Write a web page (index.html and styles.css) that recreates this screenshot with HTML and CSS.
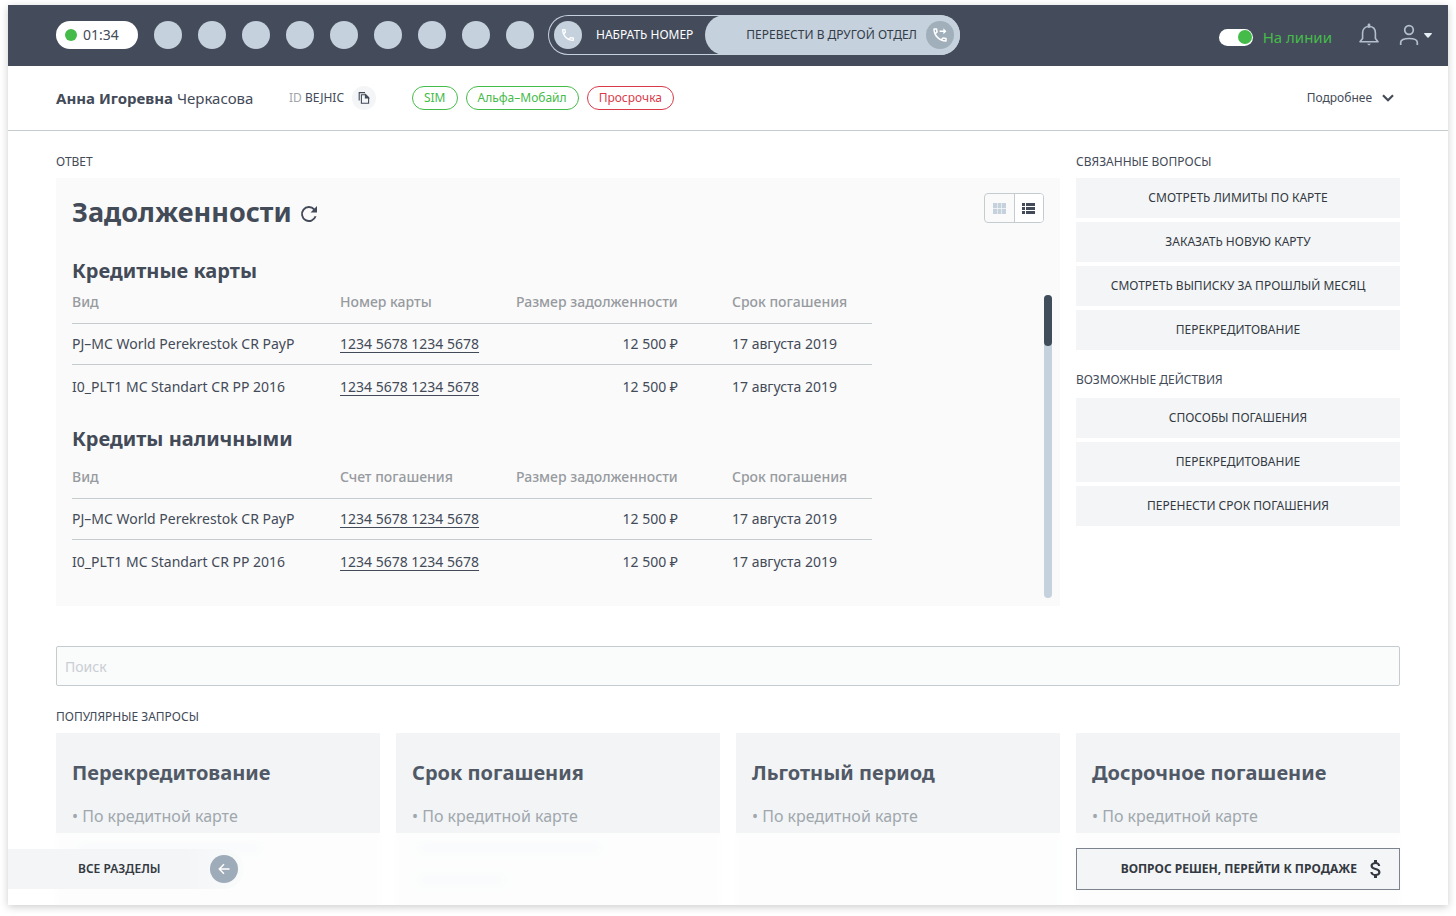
FILE: index.html
```html
<!DOCTYPE html>
<html lang="ru">
<head>
<meta charset="utf-8">
<title>Задолженности</title>
<meta name="viewport" content="width=device-width, initial-scale=1">
<link rel="stylesheet" href="styles.css">
</head>
<body>
<div class="app">
  <header class="topbar">
    <div class="timer"><span class="timer-dot"></span>01:34</div>
    <div class="slots">
      <span class="slot"></span><span class="slot"></span><span class="slot"></span>
      <span class="slot"></span><span class="slot"></span><span class="slot"></span>
      <span class="slot"></span><span class="slot"></span><span class="slot"></span>
    </div>
    <div class="call-group">
      <button type="button" class="dial">
        <span class="round">
          <svg width="16" height="16" viewBox="0 0 24 24" fill="currentColor"><path d="M6.54 5c.06.89.21 1.76.45 2.59l-1.2 1.2c-.41-1.2-.67-2.47-.76-3.79h1.51m9.86 12.02c.85.24 1.72.39 2.6.45v1.49c-1.32-.09-2.59-.35-3.8-.75l1.2-1.19M7.5 3H4c-.55 0-1 .45-1 1 0 9.39 7.61 17 17 17 .55 0 1-.45 1-1v-3.49c0-.55-.45-1-1-1-1.24 0-2.45-.2-3.57-.57-.1-.04-.21-.05-.31-.05-.26 0-.51.1-.71.29l-2.2 2.2c-2.83-1.45-5.15-3.76-6.59-6.59l2.2-2.2c.28-.28.36-.67.25-1.02C8.7 6.45 8.5 5.25 8.5 4c0-.55-.45-1-1-1z"/></svg>
        </span>
        НАБРАТЬ НОМЕР
      </button>
      <button type="button" class="transfer">
        ПЕРЕВЕСТИ В ДРУГОЙ ОТДЕЛ
        <span class="round round-dark">
          <svg width="18" height="18" viewBox="0 0 24 24" fill="currentColor"><path d="M6.54 5c.06.89.21 1.76.45 2.59l-1.2 1.2c-.41-1.2-.67-2.47-.76-3.79h1.51m9.86 12.02c.85.24 1.72.39 2.6.45v1.49c-1.32-.09-2.59-.35-3.8-.75l1.2-1.19M7.5 3H4c-.55 0-1 .45-1 1 0 9.39 7.61 17 17 17 .55 0 1-.45 1-1v-3.49c0-.55-.45-1-1-1-1.24 0-2.45-.2-3.57-.57-.1-.04-.21-.05-.31-.05-.26 0-.51.1-.71.29l-2.2 2.2c-2.83-1.45-5.15-3.76-6.59-6.59l2.2-2.2c.28-.28.36-.67.25-1.02C8.7 6.45 8.5 5.25 8.5 4c0-.55-.45-1-1-1z"/><path d="M20.500 7l-4-4v3h-5v2h5v3z"/></svg>
        </span>
      </button>
    </div>
    <div class="status">
      <input type="checkbox" id="online" class="toggle" checked>
      <label for="online">На линии</label>
    </div>
    <button type="button" class="icon-button" aria-label="Уведомления">
      <svg width="20" height="24" viewBox="0 0 20 24" fill="none" stroke="currentColor" stroke-width="1.600" stroke-linejoin="round"><path d="M3.600 15.500V10C3.600 6 6 3.500 10 3.500S16.400 6 16.400 10V15.500L19 18.800H1z"/><path d="M10 2v1.500" stroke-width="2.800" stroke-linecap="round"/><path d="M8 20.800h4L10 22.600z" fill="currentColor" stroke="none"/></svg>
    </button>
    <button type="button" class="icon-button user" aria-label="Профиль">
      <svg width="20" height="22" viewBox="0 0 20 22" fill="none" stroke="currentColor" stroke-width="1.700"><circle cx="10" cy="6" r="4.300"/><path d="M1.700 21v-2.500C1.700 15.800 5 14.500 10 14.500s8.300 1.300 8.300 4V21"/></svg>
      <svg width="8" height="5" viewBox="0 0 8 5" fill="#e6edf3"><path d="M.5 0h7q.8.300.2 1L4.600 4.500q-.6.600-1.200 0L.3 1Q-.3.300.5 0z"/></svg>
    </button>
  </header>

  <section class="client">
    <h1 class="client-name"><b>Анна Игоревна</b> Черкасова</h1>
    <div class="client-id"><span class="muted">ID</span> BEJHIC</div>
    <button type="button" class="copy" aria-label="Скопировать ID">
      <svg width="12" height="14" viewBox="0 0 12 14" fill="none" stroke="currentColor" stroke-width="1.100"><path d="M1.200 9.500V1.600H7"/><path d="M3.400 3.700H7.700L10.600 6.600V12.200H3.400z"/><path d="M7.400 3.700V6.900H10.600z" fill="currentColor"/></svg>
    </button>
    <ul class="tags">
      <li class="tag">SIM</li>
      <li class="tag">Альфа–Мобайл</li>
      <li class="tag tag-alert">Просрочка</li>
    </ul>
    <button type="button" class="more">Подробнее
      <svg width="12" height="8" viewBox="0 0 12 8" fill="none" stroke="currentColor" stroke-width="2.200"><path d="M1 1.200l5 5 5-5"/></svg>
    </button>
  </section>

  <main class="content">
    <div class="workspace">
      <section class="answer">
        <h2 class="caption">ОТВЕТ</h2>
        <div class="panel">
          <div class="panel-head">
            <h3 class="panel-title">Задолженности</h3>
            <button type="button" class="refresh" aria-label="Обновить">
              <svg width="18" height="18" viewBox="0 0 18 18" fill="none" stroke="currentColor" stroke-width="1.900"><path d="M15.600 11.300A7 7 0 1 1 14.200 4.300L15.500 5.600"/><path d="M17 1v6.500h-6.500z" fill="currentColor" stroke="none"/></svg>
            </button>
            <div class="view-switch">
              <button type="button" class="view" aria-label="Плитка">
                <svg width="13" height="11" viewBox="0 0 13 11" fill="currentColor"><path d="M0 0h4v5H0zM4.600 0h3.800v5H4.600zM9 0h4v5H9zM0 5.700h4V11H0zM4.600 5.700h3.800V11H4.600zM9 5.700h4V11H9z"/></svg>
              </button>
              <button type="button" class="view view-active" aria-label="Список">
                <svg width="13" height="11" viewBox="0 0 13 11" fill="currentColor"><path d="M0 0h3v3H0zM4 0h9v3H4zM0 4h3v3H0zM4 4h9v3H4zM0 8h3v3H0zM4 8h9v3H4z"/></svg>
              </button>
            </div>
          </div>
          <div class="panel-body">
            <div class="groups">
              <h4 class="group-title">Кредитные карты</h4>
              <table class="debts">
                <thead><tr><th class="col-kind">Вид</th><th class="col-number">Номер карты</th><th class="col-sum">Размер задолженности</th><th>Срок погашения</th></tr></thead>
                <tbody>
                  <tr><td>PJ–MC World Perekrestok CR PayP</td><td><a href="#">1234 5678 1234 5678</a></td><td class="sum">12 500 ₽</td><td>17 августа 2019</td></tr>
                  <tr><td>I0_PLT1 MC Standart CR PP 2016</td><td><a href="#">1234 5678 1234 5678</a></td><td class="sum">12 500 ₽</td><td>17 августа 2019</td></tr>
                </tbody>
              </table>
              <h4 class="group-title group-next">Кредиты наличными</h4>
              <table class="debts">
                <thead><tr><th class="col-kind">Вид</th><th class="col-number">Счет погашения</th><th class="col-sum">Размер задолженности</th><th>Срок погашения</th></tr></thead>
                <tbody>
                  <tr><td>PJ–MC World Perekrestok CR PayP</td><td><a href="#">1234 5678 1234 5678</a></td><td class="sum">12 500 ₽</td><td>17 августа 2019</td></tr>
                  <tr><td>I0_PLT1 MC Standart CR PP 2016</td><td><a href="#">1234 5678 1234 5678</a></td><td class="sum">12 500 ₽</td><td>17 августа 2019</td></tr>
                </tbody>
              </table>
            </div>
            <div class="track"><div class="thumb"></div></div>
          </div>
        </div>
      </section>

      <aside class="side">
        <h2 class="caption">СВЯЗАННЫЕ ВОПРОСЫ</h2>
        <div class="actions">
          <button type="button" class="action">СМОТРЕТЬ ЛИМИТЫ ПО КАРТЕ</button>
          <button type="button" class="action">ЗАКАЗАТЬ НОВУЮ КАРТУ</button>
          <button type="button" class="action">СМОТРЕТЬ ВЫПИСКУ ЗА ПРОШЛЫЙ МЕСЯЦ</button>
          <button type="button" class="action">ПЕРЕКРЕДИТОВАНИЕ</button>
        </div>
        <h2 class="caption caption-next">ВОЗМОЖНЫЕ ДЕЙСТВИЯ</h2>
        <div class="actions">
          <button type="button" class="action">СПОСОБЫ ПОГАШЕНИЯ</button>
          <button type="button" class="action">ПЕРЕКРЕДИТОВАНИЕ</button>
          <button type="button" class="action">ПЕРЕНЕСТИ СРОК ПОГАШЕНИЯ</button>
        </div>
      </aside>
    </div>

    <input type="search" class="search" placeholder="Поиск" aria-label="Поиск">

    <h2 class="caption">ПОПУЛЯРНЫЕ ЗАПРОСЫ</h2>
    <div class="cards">
      <article class="card"><h3>Перекредитование</h3><ul><li>По кредитной карте</li></ul><div class="ghost"></div></article>
      <article class="card"><h3>Срок погашения</h3><ul><li>По кредитной карте</li></ul><div class="ghost"></div><div class="ghost ghost-short"></div></article>
      <article class="card"><h3>Льготный период</h3><ul><li>По кредитной карте</li></ul></article>
      <article class="card"><h3>Досрочное погашение</h3><ul><li>По кредитной карте</li></ul></article>
    </div>
  </main>

  <footer class="dock">
    <button type="button" class="sections">ВСЕ РАЗДЕЛЫ
      <span class="round round-arrow">
        <svg width="12" height="12" viewBox="0 0 12 12" fill="none" stroke="currentColor" stroke-width="1.500"><path d="M11.500 6H1.500M6 1.300L1.300 6 6 10.700"/></svg>
      </span>
    </button>
    <button type="button" class="sale">ВОПРОС РЕШЕН, ПЕРЕЙТИ К ПРОДАЖЕ
      <svg width="24" height="24" viewBox="0 0 24 24" fill="currentColor"><path d="M11.800 10.900c-2.270-.59-3-1.200-3-2.150 0-1.090 1.010-1.850 2.700-1.850 1.780 0 2.440.85 2.500 2.100h2.210c-.07-1.720-1.120-3.300-3.210-3.810V3h-3v2.160c-1.940.42-3.500 1.680-3.500 3.610 0 2.310 1.910 3.460 4.700 4.130 2.500.6 3 1.480 3 2.410 0 .69-.49 1.790-2.700 1.790-2.060 0-2.870-.92-2.980-2.100h-2.200c.12 2.190 1.760 3.420 3.680 3.830V21h3v-2.150c1.950-.37 3.500-1.500 3.500-3.550 0-2.840-2.430-3.810-4.700-4.400z"/></svg>
    </button>
  </footer>
</div>
</body>
</html>
```

FILE: styles.css
```css
* { box-sizing: border-box; }

body {
  margin: 0;
  padding: 5px 8px 11px;
  overflow: hidden;
  background: #fff;
  color: #434a58;
  font-family: "Noto Sans", "Open Sans", sans-serif;
  font-size: 14px;
  line-height: 20px;
}

h1, h2, h3, h4, ul { margin: 0; padding: 0; }
ul { list-style: none; }
svg { display: block; flex: none; }

button {
  border: 0;
  padding: 0;
  background: none;
  color: inherit;
  font: inherit;
  cursor: pointer;
}

.app {
  position: relative;
  display: flex;
  flex-direction: column;
  height: calc(100vh - 16px);
  overflow: hidden;
  background: #fff;
  box-shadow: 0 2px 8px rgba(0, 0, 0, 0.2);
}

/* Top bar */
.topbar {
  flex: none;
  display: flex;
  align-items: center;
  height: 61px;
  padding: 0 16px 1px 48px;
  background: #444c5c;
}

.timer {
  display: flex;
  align-items: center;
  gap: 6px;
  width: 82px;
  height: 28px;
  padding-left: 9px;
  border-radius: 14px;
  background: #fff;
}

.timer-dot {
  width: 12px;
  height: 12px;
  border-radius: 50%;
  background: #45bb49;
}

.slots {
  display: flex;
  gap: 16px;
  margin: 0 14px 0 16px;
}

.slot {
  width: 28px;
  height: 28px;
  border-radius: 50%;
  background: #c5d1dc;
}

.call-group {
  display: flex;
  height: 40px;
  border-radius: 20px;
  box-shadow: inset 0 0 0 1px #c5d1dc;
  font-size: 12px;
  white-space: nowrap;
}

.dial {
  display: flex;
  align-items: center;
  gap: 14px;
  width: 157px;
  padding-left: 6px;
  color: #fff;
}

.transfer {
  display: flex;
  align-items: center;
  justify-content: flex-end;
  gap: 9px;
  width: 255px;
  padding-right: 6px;
  border-radius: 20px;
  background: #c5d1dc;
  color: #343c48;
}

.round {
  flex: none;
  display: flex;
  align-items: center;
  justify-content: center;
  width: 28px;
  height: 28px;
  border-radius: 50%;
  background: #c5d1dc;
  color: #fff;
}

.round-dark { background: #a0afba; }
.round-arrow { background: #9eabb8; }

.status {
  display: flex;
  align-items: center;
  gap: 10px;
  margin-left: auto;
  padding-top: 4px;
  color: #45bb49;
  font-size: 15px;
}

.toggle {
  appearance: none;
  display: flex;
  align-items: center;
  justify-content: flex-end;
  width: 34px;
  height: 17px;
  margin: 0;
  padding: 1px;
  border-radius: 9px;
  background: #fff;
}

.toggle::before {
  content: "";
  width: 14px;
  height: 14px;
  border-radius: 50%;
  background: #45bb49;
}

.toggle:not(:checked) { justify-content: flex-start; }

.icon-button {
  margin-left: 27px;
  color: #b3bfcb;
}

.user {
  display: flex;
  align-items: center;
  gap: 5px;
  margin-left: 20px;
}

/* Client row */
.client {
  flex: none;
  display: flex;
  align-items: center;
  height: 65px;
  padding: 0 54px 0 48px;
  border-bottom: 1px solid #c5ccd0;
  font-size: 12px;
}

.client-name {
  width: 233px;
  font-size: 15px;
  font-weight: 400;
}

.client-name b { font-weight: 700; }
.muted { color: #9fa5ac; }

.copy {
  display: flex;
  align-items: center;
  justify-content: center;
  width: 24px;
  height: 24px;
  margin-left: 8px;
  border-radius: 50%;
  background: #f3f5f7;
}

.tags {
  display: flex;
  gap: 8px;
  margin-left: 36px;
}

.tag {
  padding: 1px 11px;
  border: 1px solid #45bb49;
  border-radius: 12px;
  color: #45bb49;
}

.tag-alert {
  border-color: #d93a4a;
  color: #d93a4a;
}

.more {
  display: flex;
  align-items: center;
  gap: 10px;
  margin-left: auto;
}

/* Main area */
.content {
  flex: 1;
  display: flex;
  flex-direction: column;
  min-height: 0;
  padding: 21px 48px 0;
}

.workspace {
  display: grid;
  grid-template-columns: repeat(4, minmax(0, 1fr));
  gap: 16px;
}

.answer { grid-column: span 3; }

.caption {
  margin-bottom: 6px;
  font-size: 12px;
  font-weight: 400;
}

.caption-next { margin: 20px 0 8px; }

.panel {
  padding: 15px 8px 8px 16px;
  background: #fafafa;
}

.panel-head {
  display: flex;
  align-items: flex-start;
  padding-right: 8px;
}

.panel-title {
  font-size: 27px;
  font-weight: 700;
  line-height: 38px;
}

.refresh { margin: 12px 0 0 8px; }

.view-switch {
  display: flex;
  width: 60px;
  height: 30px;
  margin-left: auto;
  border: 1px solid #c5ccd0;
  border-radius: 4px;
}

.view {
  flex: 1;
  display: flex;
  align-items: center;
  justify-content: center;
  color: #c5d1dc;
}

.view-active {
  border-left: 1px solid #c5ccd0;
  border-radius: 0 3px 3px 0;
  background: #fff;
  color: #434a58;
}

.panel-body {
  display: flex;
  justify-content: space-between;
  padding-top: 25px;
}

.groups {
  width: 800px;
  padding-bottom: 14px;
}

.group-title {
  font-size: 20px;
  font-weight: 700;
  line-height: 30px;
}

.group-next { margin: 15px 0 7px; }

.debts {
  width: 100%;
  border-collapse: collapse;
  table-layout: fixed;
}

.debts th {
  height: 37px;
  padding: 0 0 4px;
  border-bottom: 1px solid #c5ccd0;
  color: #979a9f;
  font-weight: 500;
  text-align: left;
  white-space: nowrap;
}

.debts td {
  height: 41px;
  padding: 0;
  white-space: nowrap;
}

.debts tr + tr td {
  height: 45px;
  border-top: 1px solid #c5ccd0;
}

.col-kind { width: 268px; }
.col-number { width: 176px; }
.col-sum { width: 216px; }
.debts .sum { padding-right: 54px; text-align: right; }

.debts a {
  color: inherit;
  text-decoration: underline;
  text-underline-offset: 3px;
}

.track {
  width: 8px;
  margin-top: 39px;
  border-radius: 4px;
  background: #c5d1dc;
}

.thumb {
  height: 51px;
  border-radius: 4px;
  background: #414d5b;
}

.actions {
  display: flex;
  flex-direction: column;
  gap: 4px;
}

.action {
  height: 40px;
  background: #f3f5f7;
  color: #343941;
  font-size: 12px;
}

.search {
  flex: none;
  width: 100%;
  height: 40px;
  margin: 40px 0 21px;
  padding: 0 8px;
  border: 1px solid #c5ccd0;
  border-radius: 2px;
  background: #fafbfb;
  font: inherit;
}

.search::placeholder { color: #c9ced3; }

.cards {
  flex: 1;
  display: grid;
  grid-template-columns: repeat(4, minmax(0, 1fr));
  gap: 16px;
}

.card {
  padding: 24px 16px;
  background: #f2f4f6;
}

.card h3 {
  margin-bottom: 11px;
  color: #505965;
  font-size: 20px;
  line-height: 32px;
}

.card li {
  color: #a0a7ad;
  font-size: 16px;
  line-height: 32px;
}

.card li::before { content: "• "; }

.ghost {
  width: 180px;
  height: 8px;
  margin: 12px 0 24px 8px;
  background: #dde3e8;
}

.ghost-short { width: 84px; }

/* Frosted strip pinned over the bottom of the cards */
.dock {
  position: absolute;
  right: 0;
  bottom: 0;
  left: 0;
  display: flex;
  align-items: center;
  justify-content: space-between;
  height: 72px;
  padding: 0 48px 0 0;
  background: rgba(255, 255, 255, 0.8);
  backdrop-filter: blur(4px);
  color: #343941;
  font-size: 12px;
}

.sections {
  display: flex;
  align-items: center;
  justify-content: space-between;
  width: 236px;
  height: 40px;
  padding: 0 6px 0 70px;
  border-radius: 0 20px 20px 0;
  background: linear-gradient(90deg, #f3f5f7 75%, #fafbfb);
  font-weight: 600;
}

.sale {
  display: flex;
  align-items: center;
  justify-content: flex-end;
  gap: 7px;
  width: calc((100% - 96px) / 4);
  height: 42px;
  padding-right: 11px;
  border: 1px solid #7d838c;
  background: #f3f5f7;
  font-weight: 700;
}
```
